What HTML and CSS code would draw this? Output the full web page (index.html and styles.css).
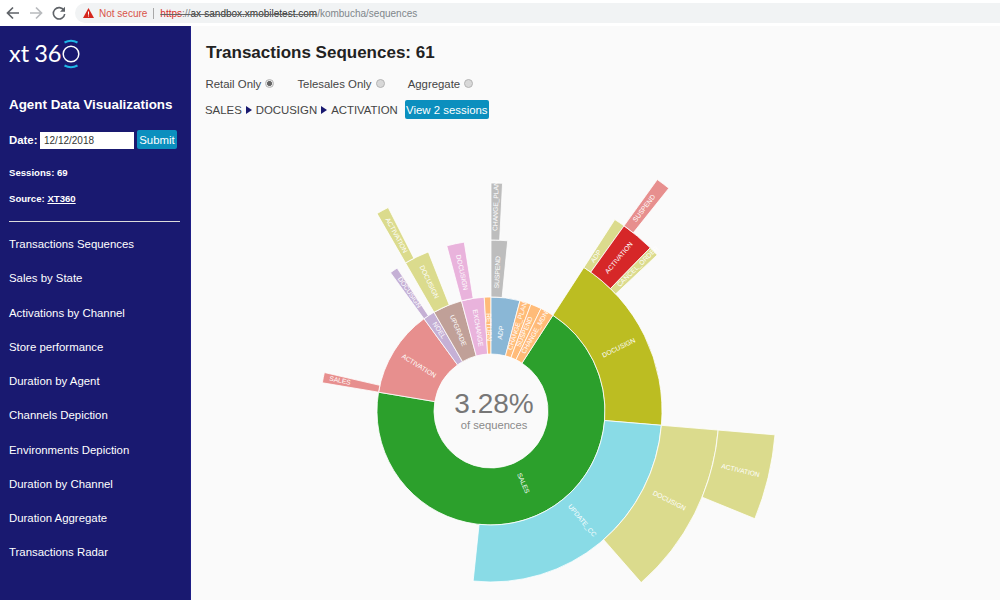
FILE: index.html
```html
<!DOCTYPE html>
<html lang="en">
<head>
<meta charset="utf-8">
<title>Transactions Sequences</title>
<link rel="stylesheet" href="styles.css">
</head>
<body>
<header class="browser">
  <svg class="nav-icon" viewBox="0 0 26 26"><path d="M19 13H8M13 7.500 7.500 13l5.500 5.500" fill="none" stroke="#5f6368" stroke-width="1.700"/></svg>
  <svg class="nav-icon nav-fwd" viewBox="0 0 26 26"><path d="M7 13h11M13 7.500 18.500 13 13 18.500" fill="none" stroke="#b8babd" stroke-width="1.700"/></svg>
  <svg class="nav-icon nav-reload" viewBox="0 0 26 26"><path d="M18 10.500A5.700 5.700 0 1 0 18.700 14" fill="none" stroke="#5f6368" stroke-width="1.600"/><path d="M19 6.800v5h-5z" fill="#5f6368"/></svg>
  <div class="omnibox">
    <svg class="warn" viewBox="0 0 11 10"><path d="M5.500 0 11 10H0z" fill="#d5261c"/><path d="M5 3.500h1v3.300H5zM5 7.600h1v1H5z" fill="#fff"/></svg>
    <span class="not-secure">Not secure</span>
    <span class="sep"></span>
    <span class="url"><span class="struck"><span class="scheme">https</span><span class="faint">://</span>ax-sandbox.xmobiletest.com</span><span class="faint">/kombucha/sequences</span></span>
  </div>
</header>
<div class="app">
  <aside class="sidebar">
    <div class="logo">
      <span class="logo-text">xt 36</span>
      <svg class="logo-ring" viewBox="0 0 32 34"><circle cx="16" cy="17" r="7.800" fill="none" stroke="#fff" stroke-width="1.500"/><path d="M9.500 5.500a14 14 0 0 1 13 0M9.500 28.500a14 14 0 0 0 13 0" fill="none" stroke="#1fb6e6" stroke-width="2"/></svg>
    </div>
    <h2 class="side-title">Agent Data Visualizations</h2>
    <form class="date-form">
      <label class="date-label" for="date">Date:</label>
      <input class="date-input" id="date" type="text" value="12/12/2018">
      <button class="btn submit" type="button">Submit</button>
    </form>
    <p class="meta">Sessions: 69</p>
    <p class="meta meta-source">Source: <a href="#">XT360</a></p>
    <hr class="rule">
    <nav class="menu">
      <a href="#">Transactions Sequences</a>
      <a href="#">Sales by State</a>
      <a href="#">Activations by Channel</a>
      <a href="#">Store performance</a>
      <a href="#">Duration by Agent</a>
      <a href="#">Channels Depiction</a>
      <a href="#">Environments Depiction</a>
      <a href="#">Duration by Channel</a>
      <a href="#">Duration Aggregate</a>
      <a href="#">Transactions Radar</a>
    </nav>
  </aside>
  <main class="content">
    <h1 class="page-title">Transactions Sequences: 61</h1>
    <div class="filters">
      <label class="filter">Retail Only <input type="radio" name="scope" checked></label>
      <label class="filter">Telesales Only <input type="radio" name="scope"></label>
      <label class="filter">Aggregate <input type="radio" name="scope"></label>
    </div>
    <div class="crumbs">
      <span>SALES</span><i class="tri"></i><span>DOCUSIGN</span><i class="tri"></i><span>ACTIVATION</span>
      <button class="btn view" type="button">View 2 sessions</button>
    </div>
    <svg class="chart" id="chart" viewBox="191 127 809 473" preserveAspectRatio="xMinYMin meet">
      <text class="big" x="494" y="413">3.28%</text>
      <text class="small" x="494" y="429">of sequences</text>
    </svg>
  </main>
</div>
<script src="chart.js"></script>
</body>
</html>
```
FILE: styles.css
```css
* { box-sizing: border-box; }
html, body { margin: 0; height: 100%; }
body {
  width: 1000px; height: 600px; overflow: hidden;
  display: flex; flex-direction: column;
  font-family: "Liberation Sans", Arial, sans-serif;
  background: #fafafa; color: #333;
}
.browser {
  height: 26px; flex: none; background: #fff;
  display: flex; align-items: center; padding-left: 0;
}
.nav-icon { width: 26px; height: 26px; flex: none; }
.nav-fwd { margin-left: -3px; margin-right: 0; width: 26px; }
.nav-reload { margin-left: -3px; }
.omnibox {
  margin-left: 3px; flex: 1; height: 20px; margin-top: 0;
  background: #f1f3f4; border-radius: 10px 0 0 10px;
  display: flex; align-items: center; padding-left: 8px; font-size: 10px;
}
.warn { width: 11px; height: 10px; flex: none; }
.not-secure { color: #d9534a; margin-left: 5px; }
.sep { width: 1px; height: 11px; background: #a8a8a8; margin: 0 6px; }
.url { color: #333; white-space: nowrap; }
.struck { text-decoration: line-through; text-decoration-color: #666; }
.scheme { color: #d5322a; }
.faint { color: #80868b; }

.app { flex: 1; display: flex; min-height: 0; }
.sidebar {
  width: 191px; flex: none; background: #191970; color: #fff;
  padding: 8px 10px 0 9px; border-right: 1px solid #1f1f86;
}
.logo { display: flex; align-items: center; height: 40px; }
.logo-text { font-family: Lato, "Open Sans", sans-serif; font-weight: 400; font-size: 23.500px; line-height: 1; word-spacing: -1px; }
.logo-ring { width: 32px; height: 34px; margin-left: -6px; flex: none; }
.side-title { margin: 23px 0 0; font-size: 13.4px; line-height: 16px; font-weight: 700; white-space: nowrap; }
.date-form { display: flex; align-items: center; margin-top: 17px; height: 19px; white-space: nowrap; }
.date-label { font-size: 11.4px; font-weight: 700; width: 31px; flex: none; }
.date-input {
  width: 94px; height: 17px; border: 0; padding: 0 0 0 4px; margin: 1px 0 0;
  background: #fff; color: #333; font: 10px "Liberation Sans", Arial, sans-serif;
}
.btn { border: 0; border-radius: 2px; background: #0b8fbe; color: #fff; font-family: inherit; padding: 0; }
.submit { width: 40px; height: 19px; margin-left: 3px; font-size: 11.4px; }
.meta { margin: 18px 0 0; font-size: 9.6px; line-height: 12px; font-weight: 700; }
.meta-source { margin-top: 14px; }
.meta a { color: #fff; }
.rule { border: 0; height: 1px; background: #dcdcdc; margin: 16px 0 0; width: 171px; }
.menu { display: flex; flex-direction: column; margin-top: 5px; }
.menu a { height: 34.25px; line-height: 34.25px; font-size: 11.4px; color: #fff; text-decoration: none; white-space: nowrap; }

.content { flex: 1; min-width: 0; display: flex; flex-direction: column; overflow: hidden; }
.page-title { margin: 17px 0 0 15px; font-size: 17px; line-height: 20px; font-weight: 700; color: #222; white-space: nowrap; }
.filters { display: flex; align-items: center; margin: 14px 0 0 14.500px; height: 14px; font-size: 11.4px; color: #444; }
.filter { display: flex; align-items: center; margin-right: 23px; white-space: pre; }
.filter input {
  appearance: none; width: 9px; height: 9px; margin: -2px 0 0 1px; border-radius: 50%;
  background: #d8d8d8; border: 1px solid #b4b4b4;
}
.filter input:checked { background: radial-gradient(circle, #666 0 2.2px, #e4e4e4 2.6px); }
.crumbs { display: flex; align-items: center; margin: 9px 0 0 14px; height: 19px; font-size: 11.4px; color: #444; white-space: nowrap; }
.tri { width: 0; height: 0; border-left: 6px solid #191970; border-top: 4px solid transparent; border-bottom: 4px solid transparent; margin: 0 4px 0 4px; }
.view { width: 84px; height: 19px; margin-left: 7px; font-size: 11.4px; }
.chart { display: block; width: 809px; height: 473px; flex: none; margin-top: 8px; overflow: hidden; }
.chart .seg { stroke: #fff; stroke-width: .8; }
.chart .lab { fill: #fff; font-size: 6.7px; text-anchor: middle; dominant-baseline: middle; }
.chart .big { fill: #777; font-size: 28px; text-anchor: middle; }
.chart .small { fill: #8a8a8a; font-size: 11.2px; text-anchor: middle; }
```
FILE: chart.js
```js
(function () {
  var CX = 491, CY = 411;
  var R = [57, 114, 171, 228, 285];
  // ring, start angle, end angle, colour, label, label radius (optional)
  var DATA = [
    [0, 32.9, 279.5, '#2ca02c', 'SALES', 79],
    [0, 279.5, 324, '#e78f8e', 'ACTIVATION', 85],
    [0, 324, 330, '#c5b0d5', 'NOEL', 96],
    [0, 330, 345, '#c0a098', 'UPGRADE', 87],
    [0, 345, 356.6, '#e9b3dc', 'EXCHANGE', 84],
    [0, 356.6, 360, '#ffbb78', 'RETURN', 84],
    [0, 0, 14.7, '#8ab7d6', 'ADP', 79],
    [0, 14.7, 20.5, '#ffbb78', 'CHANGE_PLAN', 89],
    [0, 20.5, 26, '#ffbb78', 'SUSPEND', 86],
    [0, 26, 32.9, '#ffbb78', 'CHANGE_MDN', 90],
    [1, 32.9, 94.8, '#bcbd22', 'DOCUSIGN'],
    [1, 94.8, 186, '#89dbe6', 'UPDATE_CC'],
    [1, 279.5, 283, '#e78f8e', 'SALES', 154],
    [1, 324, 326.7, '#c5b0d5', 'DOCUSIGN', 144],
    [1, 330, 338.5, '#dbdb8d', 'DOCUSIGN', 143],
    [1, 345, 351, '#e9b3dc', 'DOCUSIGN', 141.5],
    [1, 0, 5.6, '#bdbdbd', 'SUSPEND', 139],
    [2, 32.9, 35.7, '#dbdb8d', 'ADP', 187],
    [2, 35.7, 44.3, '#d62728', 'ACTIVATION'],
    [2, 44.3, 46.8, '#dbdb8d', 'CANCEL_ORDER', 206],
    [2, 94.8, 138.8, '#dbdb8d', 'DOCUSIGN'],
    [2, 330, 333.2, '#dbdb8d', 'ACTIVATION'],
    [2, 0, 2.9, '#bdbdbd', 'CHANGE_PLAN', 205],
    [3, 35.7, 38.6, '#e78f8e', 'SUSPEND', 254],
    [3, 94.8, 112.2, '#dbdb8d', 'ACTIVATION']
  ];
  var NS = 'http://www.w3.org/2000/svg';
  var svg = document.getElementById('chart');
  var first = svg.firstChild;
  function pt(r, a) {
    var t = a * Math.PI / 180;
    return (CX + r * Math.sin(t)).toFixed(2) + ' ' + (CY - r * Math.cos(t)).toFixed(2);
  }
  function el(name, attrs) {
    var e = document.createElementNS(NS, name);
    for (var k in attrs) e.setAttribute(k, attrs[k]);
    return e;
  }
  var labels = [];
  DATA.forEach(function (d) {
    var r0 = R[d[0]], r1 = R[d[0] + 1], a0 = d[1], a1 = d[2];
    var large = a1 - a0 > 180 ? 1 : 0;
    var p = 'M' + pt(r0, a0) + 'A' + r0 + ' ' + r0 + ' 0 ' + large + ' 1 ' + pt(r0, a1) +
      'L' + pt(r1, a1) + 'A' + r1 + ' ' + r1 + ' 0 ' + large + ' 0 ' + pt(r1, a0) + 'Z';
    svg.insertBefore(el('path', { d: p, fill: d[3], 'class': 'seg' }), first);
    var mid = (a0 + a1) / 2, lr = d[5] || (r0 + r1) / 2;
    var rot = mid > 180 ? mid + 90 : mid - 90;
    var t = mid * Math.PI / 180;
    var x = CX + lr * Math.sin(t), y = CY - lr * Math.cos(t);
    var tx = el('text', { 'class': 'lab', transform: 'translate(' + x.toFixed(2) + ' ' + y.toFixed(2) + ') rotate(' + rot.toFixed(2) + ')' });
    tx.textContent = d[4];
    labels.push(tx);
  });
  labels.forEach(function (l) { svg.insertBefore(l, first); });
})();
```
